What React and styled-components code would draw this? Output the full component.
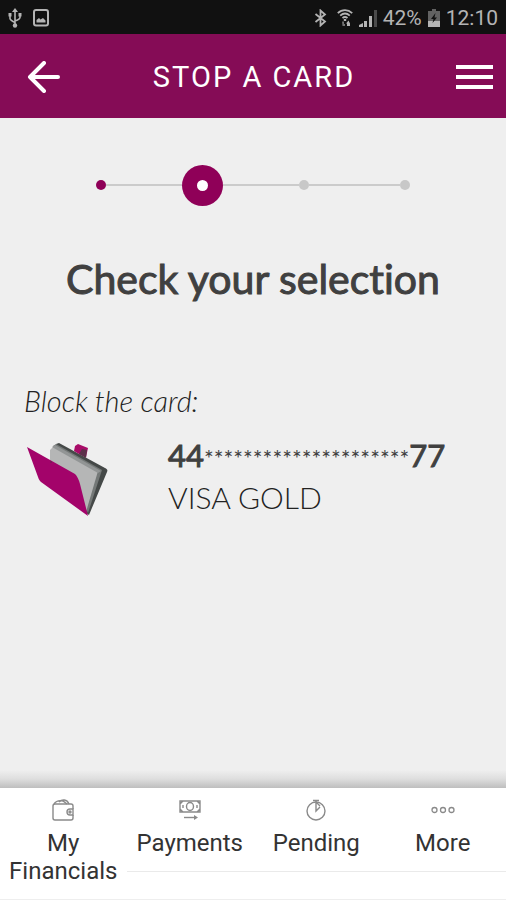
import styled, { createGlobalStyle } from "styled-components";

const GlobalStyle = createGlobalStyle`
  * {
    box-sizing: border-box;
  }
  body {
    margin: 0;
    background: #efefef;
    color: #404040;
    font-family: Lato, sans-serif;
    font-variant-ligatures: none;
  }
`;

const Page = styled.div`
  display: flex;
  flex-direction: column;
  min-height: 100vh;
`;

const StatusBar = styled.div`
  display: flex;
  justify-content: space-between;
  align-items: center;
  height: 34px;
  padding: 2px 8px 0;
  background: #111111;
  color: #b4b4b4;
  font-family: Roboto, sans-serif;
  font-size: 21px;
`;

const StatusGroup = styled.div`
  display: flex;
  align-items: center;
  gap: ${({ $gap }) => $gap}px;
`;

const Header = styled.header`
  display: grid;
  grid-template-columns: 1fr auto 1fr;
  justify-items: start;
  align-items: center;
  height: 84px;
  padding: 2px 12px 0;
  background: #850c56;
  color: #ffffff;
`;

const HeaderButton = styled.button`
  display: flex;
  justify-content: center;
  align-items: center;
  height: 48px;
  padding: 0;
  border: none;
  background: none;
  color: inherit;
  cursor: pointer;
`;

const BackButton = styled(HeaderButton)`
  padding-left: 15px;
`;

const MenuButton = styled(HeaderButton)`
  justify-self: end;
`;

const HeaderTitle = styled.h1`
  margin: 0;
  padding-left: 2px;
  font-family: Roboto, sans-serif;
  font-size: 29px;
  font-weight: 400;
  letter-spacing: 2px;
  text-transform: uppercase;
`;

const Content = styled.main`
  flex: 1;
`;

const Steps = styled.ol`
  display: grid;
  grid-template-columns: repeat(4, 1fr);
  width: 80%;
  margin: 46px auto 0;
  padding: 0;
  list-style: none;
`;

const Step = styled.li`
  display: grid;
  grid-template-columns: 1fr auto 1fr;
  align-items: center;
  height: 42px;
`;

const StepLine = styled.span`
  height: 2px;
  background: ${({ $hidden }) => ($hidden ? "transparent" : "#cbcbcb")};
`;

const StepDot = styled.span`
  width: 10px;
  height: 10px;
  border-radius: 50%;
  background: ${({ $done }) => ($done ? "#8f0058" : "#c8c8c8")};
`;

const CurrentDot = styled.span`
  display: flex;
  justify-content: center;
  align-items: center;
  width: 41px;
  height: 41px;
  border-radius: 50%;
  background: #8f0058;

  &::after {
    content: "";
    width: 11px;
    height: 11px;
    border-radius: 50%;
    background: #ffffff;
  }
`;

const Title = styled.h2`
  margin: 48px 0 0;
  font-size: 41px;
  font-weight: 400;
  line-height: 50px;
  text-align: center;
  -webkit-text-stroke: 1px currentColor;
`;

const Selection = styled.section`
  margin-top: 80px;
  padding: 0 24px;
`;

const SelectionLabel = styled.p`
  margin: 0;
  color: #222222;
  font-size: 29px;
  font-style: italic;
  font-weight: 300;
  line-height: 34px;
`;

const Card = styled.div`
  display: grid;
  grid-template-columns: 84px 1fr;
  column-gap: 60px;
  align-items: end;
  margin-top: 16px;
`;

const CardText = styled.p`
  margin: 0;
  color: #222222;
  font-size: 30px;
  font-weight: 300;
  line-height: 42px;
`;

const CardNumber = styled(CardText)`
  display: flex;
  height: 42px;
  color: #404040;
  font-size: 31px;
  font-weight: 400;
  -webkit-text-stroke: 1px currentColor;
`;

const Mask = styled.span`
  font-size: 23px;
  line-height: 48px;
  -webkit-text-stroke: 0;
`;

const BottomShade = styled.div`
  height: 18px;
  background: linear-gradient(#efefef, #dedede 50%, #bebebe);
`;

const BottomNav = styled.nav`
  display: grid;
  grid-template-columns: repeat(4, 1fr);
  align-items: start;
  height: 112px;
  border-bottom: 1px solid #eeeeee;
  background: #ffffff;
`;

const NavLink = styled.a`
  display: flex;
  flex-direction: column;
  align-items: center;
  min-height: 84px;
  padding-top: 10px;
  border-bottom: 1px solid ${({ $tall }) => ($tall ? "transparent" : "#eaeaea")};
  color: #333333;
  font-family: Roboto, sans-serif;
  font-size: 24px;
  line-height: 28px;
  text-align: center;
  text-decoration: none;

  & > svg {
    margin-bottom: 7px;
    color: #8a8a8a;
  }
`;

const UsbIcon = () => (
  <svg width="14" height="20" viewBox="0 0 14 20" fill="none" stroke="currentColor" strokeWidth="1.6">
    <path d="M7 3v14M2 7v3.5c0 1.5 1 2 5 4M12 7v2.5c0 1.5-1 2-5 3.5" />
    <path d="M7 0l3 4H4zM.5 5h3v3.5h-3zM10.5 5h3v3.5h-3z" fill="currentColor" stroke="none" />
    <circle cx="7" cy="17.5" r="2.2" fill="currentColor" stroke="none" />
  </svg>
);

const PictureIcon = () => (
  <svg width="16" height="18" viewBox="0 0 16 18" fill="none" stroke="currentColor" strokeWidth="2">
    <rect x="1" y="1" width="14" height="15.5" rx="2" />
    <path d="M3.5 13.5V11L6 9l1.5 1.5L10 9l2.5 2.5v2z" fill="currentColor" stroke="none" />
  </svg>
);

const BluetoothIcon = () => (
  <svg width="13" height="18" viewBox="0 0 13 18" fill="none" stroke="currentColor" strokeWidth="1.8">
    <path d="M1.5 5l9.5 7.5-4.5 4v-15l4.5 4L1.5 13" />
  </svg>
);

const WifiIcon = () => (
  <svg width="16" height="18" viewBox="0 0 16 18" fill="none" stroke="currentColor" strokeWidth="1.8">
    <path d="M.8 4.2C5 .2 11 .2 15.2 4.2M3.2 6.6c3-2.6 6.6-2.6 9.6 0M5.5 9c1.6-1.3 3.4-1.3 5 0" />
    <path d="M6.8 10h2.4v2H6.8z" fill="currentColor" stroke="none" />
    <path d="M5 12.5h2V15h1v2H5.500z" fill="currentColor" stroke="none" opacity=".6" />
    <path d="M10 17v-2.500h-1l2.500-3 1.500 3V17z" fill="currentColor" stroke="none" />
  </svg>
);

const SignalIcon = () => (
  <svg width="18" height="18" viewBox="0 0 18 18" fill="currentColor">
    <path d="M0 16l4-2v4H0zM5 12h3v6H5zM10 7h3v11h-3z" />
    <path d="M15 1h3v17h-3z" opacity=".35" />
  </svg>
);

const BatteryIcon = () => (
  <svg width="12" height="18" viewBox="0 0 12 18" fill="currentColor">
    <path d="M4 0h4v2h4v16H0V2h4z" opacity=".5" />
    <path d="M0 12h12v6H0z" />
    <path d="M7.5 4L3 10h2.5l-1 4L9 8.5H6.5z" fill="#111111" />
  </svg>
);

const BackIcon = () => (
  <svg width="34" height="32" viewBox="0 0 34 32" fill="none" stroke="currentColor" strokeWidth="4" strokeLinecap="round" strokeLinejoin="round">
    <path d="M17 2L3 16l14 14M3 16h28" />
  </svg>
);

const MenuIcon = () => (
  <svg width="38" height="26" viewBox="0 0 38 26" fill="currentColor">
    <path d="M0 1h37v4H0zM0 11h37v4H0zM0 21h37v4H0z" />
  </svg>
);

const WalletPicture = () => (
  <svg width="84" height="76" viewBox="0 0 84 76" aria-hidden="true">
    <path d="M32 2l3-1 46 25c2 1 3 2 2 4L65 73l-3-2z" fill="#454948" />
    <path d="M29 4l3-2 46 26-14 43z" fill="#747877" />
    <path d="M26 8l4-4 44 25-12 41-36-50z" fill="#b5b6b6" />
    <path d="M28 5l46 26 3-2L31 3z" fill="#929595" />
    <path d="M51 4l3-2 10 4-2 9-7-3-5-3z" fill="#a80c68" />
    <path d="M58 7l5 1-1 8-7-4z" fill="#5b3049" />
    <path d="M3 5l48 27c2 2 4 6 5 10l8 32-47-34c-1-1-2-2-3-5z" fill="#a3036a" />
    <path d="M26 20l1-1 1 1-1 1z" fill="#5b3049" />
  </svg>
);

const FinancialsIcon = () => (
  <svg width="24" height="24" viewBox="0 0 24 24" fill="none" stroke="currentColor" strokeWidth="1.4">
    <path d="M22 11V8c0-1-1-2-2-2H4C3 6 2 7 2 8v12c0 1 1 2 2 2h16c1 0 2-1 2-2v-3" />
    <path d="M3 6c2-3 5-4 9-3l4 3M8 4c3-3 8-3 10 2" />
    <path d="M22 11h-3c-4 0-4 6 0 6h3z" />
    <circle cx="19" cy="14" r="1" />
  </svg>
);

const PaymentsIcon = () => (
  <svg width="24" height="24" viewBox="0 0 24 24" fill="none" stroke="currentColor" strokeWidth="1.4">
    <path d="M2 3h20v11H2zM2 6l3-3M22 6l-3-3M2 11l3 3M22 11l-3 3M5 7v3M19 7v3" />
    <ellipse cx="12" cy="8.5" rx="3.5" ry="4" />
    <path d="M6 19.5h11" />
    <path d="M16 17l4 2.5-4 2.500z" fill="currentColor" stroke="none" />
  </svg>
);

const PendingIcon = () => (
  <svg width="24" height="24" viewBox="0 0 24 24" fill="none" stroke="currentColor" strokeWidth="1.4">
    <circle cx="12" cy="13" r="9" />
    <path d="M9 2.5h6M12 2v11l4-4M12 4l4 4" />
  </svg>
);

const MoreIcon = () => (
  <svg width="24" height="24" viewBox="0 0 24 24" fill="none" stroke="currentColor" strokeWidth="1.3">
    <circle cx="3.5" cy="12" r="2.5" />
    <circle cx="12" cy="12" r="2.5" />
    <circle cx="20.5" cy="12" r="2.5" />
  </svg>
);

const App = () => {
  const steps = ["done", "current", "next", "next"];
  const links = [
    { label: "My Financials", icon: <FinancialsIcon />, tall: true },
    { label: "Payments", icon: <PaymentsIcon /> },
    { label: "Pending", icon: <PendingIcon /> },
    { label: "More", icon: <MoreIcon /> },
  ];

  return (
    <Page>
      <GlobalStyle />
      <StatusBar>
        <StatusGroup $gap={11}>
          <UsbIcon />
          <PictureIcon />
        </StatusGroup>
        <StatusGroup $gap={10}>
          <BluetoothIcon />
          <StatusGroup $gap={6}>
            <WifiIcon />
            <SignalIcon />
            <span>42%</span>
            <BatteryIcon />
            <span>12:10</span>
          </StatusGroup>
        </StatusGroup>
      </StatusBar>
      <Header>
        <BackButton type="button" aria-label="Back">
          <BackIcon />
        </BackButton>
        <HeaderTitle>Stop a card</HeaderTitle>
        <MenuButton type="button" aria-label="Menu">
          <MenuIcon />
        </MenuButton>
      </Header>
      <Content>
        <Steps>
          {steps.map((step, index) => (
            <Step key={index} aria-current={step === "current" ? "step" : undefined}>
              <StepLine $hidden={index === 0} />
              {step === "current" ? <CurrentDot /> : <StepDot $done={step === "done"} />}
              <StepLine $hidden={index === steps.length - 1} />
            </Step>
          ))}
        </Steps>
        <Title>Check your selection</Title>
        <Selection>
          <SelectionLabel>Block the card:</SelectionLabel>
          <Card>
            <WalletPicture />
            <div>
              <CardNumber>
                44<Mask>{"*".repeat(21)}</Mask>77
              </CardNumber>
              <CardText>VISA GOLD</CardText>
            </div>
          </Card>
        </Selection>
      </Content>
      <BottomShade />
      <BottomNav>
        {links.map(({ label, icon, tall }) => (
          <NavLink href="#" key={label} $tall={tall}>
            {icon}
            {label}
          </NavLink>
        ))}
      </BottomNav>
    </Page>
  );
};

export default App;
